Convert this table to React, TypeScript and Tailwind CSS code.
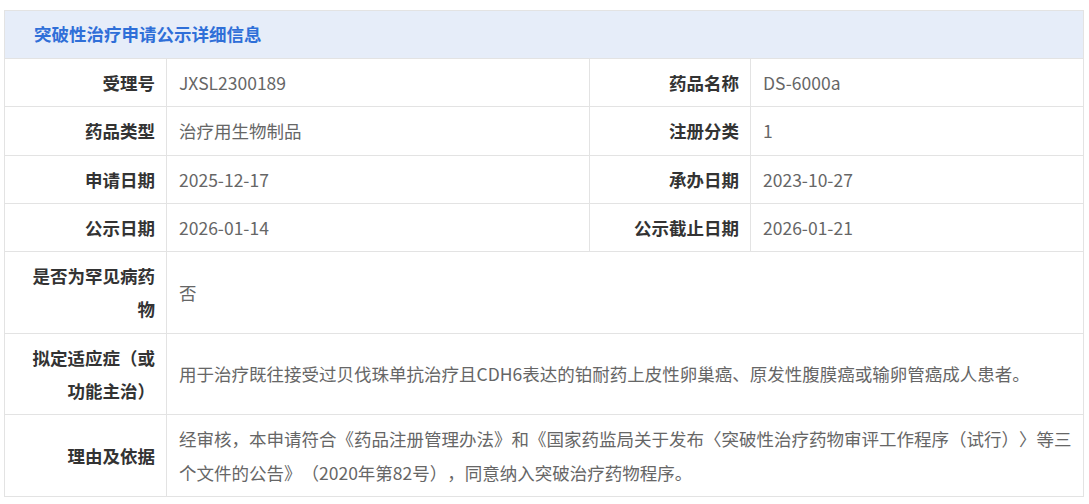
import React from "react";

const font = { fontFamily: '"Noto Sans CJK SC", "Noto Sans", sans-serif' };

function Label({ children }: { children: React.ReactNode }) {
  return (
    <div className="flex items-center justify-end border-r border-b border-[#e3e3e3] py-[7px] pr-[11px] pl-2 text-right font-bold text-[#333333] leading-[33.3px]">
      <div>{children}</div>
    </div>
  );
}

function Value({ children, span }: { children: React.ReactNode; span?: boolean }) {
  return (
    <div
      className={
        "flex items-center border-r border-b border-[#e3e3e3] py-[7px] pl-[12px] pr-2 text-[#666666] leading-[33.3px] " +
        (span ? "col-span-3" : "")
      }
    >
      <div>{children}</div>
    </div>
  );
}

export default function App() {
  return (
    <div className="bg-white min-h-screen pt-[10px] pl-[4px] [text-spacing-trim:space-all]" style={font}>
      <div className="w-[1080px] border-l border-t border-[#e3e3e3] text-[17.5px]">
        <div className="h-[48px] flex items-center bg-[#e6edf9] border-r border-b border-[#e3e3e3] pl-[29px] font-bold text-[#2f6fd8]">
          突破性治疗申请公示详细信息
        </div>
        <div className="grid grid-cols-[162px_423px_161px_333px]">
          <Label>受理号</Label>
          <Value>JXSL2300189</Value>
          <Label>药品名称</Label>
          <Value>DS-6000a</Value>

          <Label>药品类型</Label>
          <Value>治疗用生物制品</Value>
          <Label>注册分类</Label>
          <Value>1</Value>

          <Label>申请日期</Label>
          <Value>2025-12-17</Value>
          <Label>承办日期</Label>
          <Value>2023-10-27</Value>

          <Label>公示日期</Label>
          <Value>2026-01-14</Value>
          <Label>公示截止日期</Label>
          <Value>2026-01-21</Value>

          <Label>
            <div>是否为罕见病药</div>
            <div>物</div>
          </Label>
          <Value span>否</Value>

          <Label>
            <div>拟定适应症（或</div>
            <div>功能主治）</div>
          </Label>
          <Value span>
            <span className="whitespace-nowrap">
              用于治疗既往接受过贝伐珠单抗治疗且CDH6表达的铂耐药上皮性卵巢癌、原发性腹膜癌或输卵管癌成人患者。
            </span>
          </Value>

          <Label>理由及依据</Label>
          <Value span>
            <div className="whitespace-nowrap">
              经审核，本申请符合《药品注册管理办法》和《国家药监局关于发布〈突破性治疗药物审评工作程序（试行）〉等三
            </div>
            <div className="whitespace-nowrap">个文件的公告》（2020年第82号），同意纳入突破治疗药物程序。</div>
          </Value>
        </div>
      </div>
    </div>
  );
}
